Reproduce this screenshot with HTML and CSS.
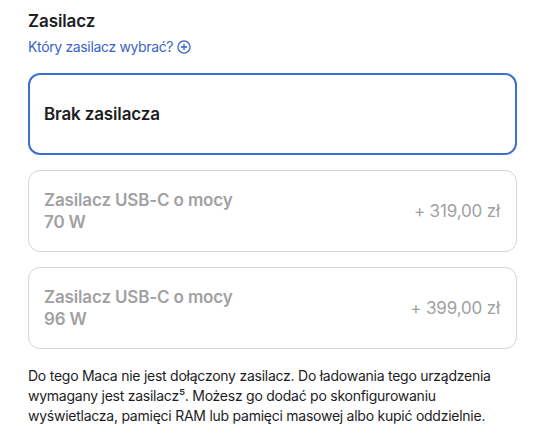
FILE: index.html
```html
<!DOCTYPE html>
<html lang="pl">
<head>
<meta charset="utf-8">
<link rel="stylesheet" href="styles.css">
</head>
<body>
<section class="group">
  <h2 class="title">Zasilacz</h2>
  <a class="help" href="#">Który zasilacz wybrać?
    <svg class="plus" width="14" height="14" viewBox="0 0 14 14" aria-hidden="true"><circle cx="7" cy="7" r="6.1" fill="none" stroke="currentColor" stroke-width="1.3"/><path d="M7 3.8v6.4M3.8 7h6.4" stroke="currentColor" stroke-width="1.3" fill="none"/></svg>
  </a>
  <div class="options">
    <div class="option selected">
      <span class="name">Brak zasilacza</span>
    </div>
    <div class="option disabled">
      <span class="name">Zasilacz USB-C o mocy<br>70 W</span>
      <span class="price">+ 319,00 zł</span>
    </div>
    <div class="option disabled">
      <span class="name">Zasilacz USB-C o mocy<br>96 W</span>
      <span class="price">+ 399,00 zł</span>
    </div>
  </div>
  <p class="note">Do tego Maca nie jest dołączony zasilacz. Do ładowania tego urządzenia wymagany jest zasilacz⁵. Możesz go dodać po skonfigurowaniu wyświetlacza, pamięci RAM lub pamięci masowej albo kupić oddzielnie.</p>
</section>
</body>
</html>
```
FILE: styles.css
```css
html, body {
  margin: 0;
  padding: 0;
  background: #fff;
}
body {
  font-family: Inter, "Noto Sans", sans-serif;
  color: #1d1d1f;
}
.group {
  padding: 9px 30px 0 28px;
}
.title {
  margin: 0;
  font-size: 17px;
  font-weight: 600;
  line-height: 24px;
  letter-spacing: -0.1px;
}
.help {
  display: inline-flex;
  align-items: center;
  gap: 4px;
  margin-top: 4px;
  font-size: 14px;
  line-height: 20px;
  color: #3a63c6;
  text-decoration: none;
  letter-spacing: -0.35px;
}
.plus {
  display: block;
}
.options {
  display: flex;
  flex-direction: column;
  gap: 15px;
  margin-top: 16px;
}
.option {
  box-sizing: border-box;
  height: 82px;
  border: 1px solid #d6d6d6;
  border-radius: 12px;
  display: flex;
  align-items: center;
  justify-content: space-between;
  padding: 0 16px 0 15px;
  font-size: 17px;
  line-height: 22px;
  letter-spacing: -0.15px;
}
.option.selected {
  border: 2px solid #3b6fd1;
  padding-left: 14px;
}
.name {
  font-weight: 600;
}
.option.disabled {
  color: #a1a1a4;
}
.price {
  font-weight: 400;
}
.note {
  margin: 17px 0 0;
  font-size: 14px;
  line-height: 20px;
  letter-spacing: -0.25px;
  color: #1d1d1f;
}
```
